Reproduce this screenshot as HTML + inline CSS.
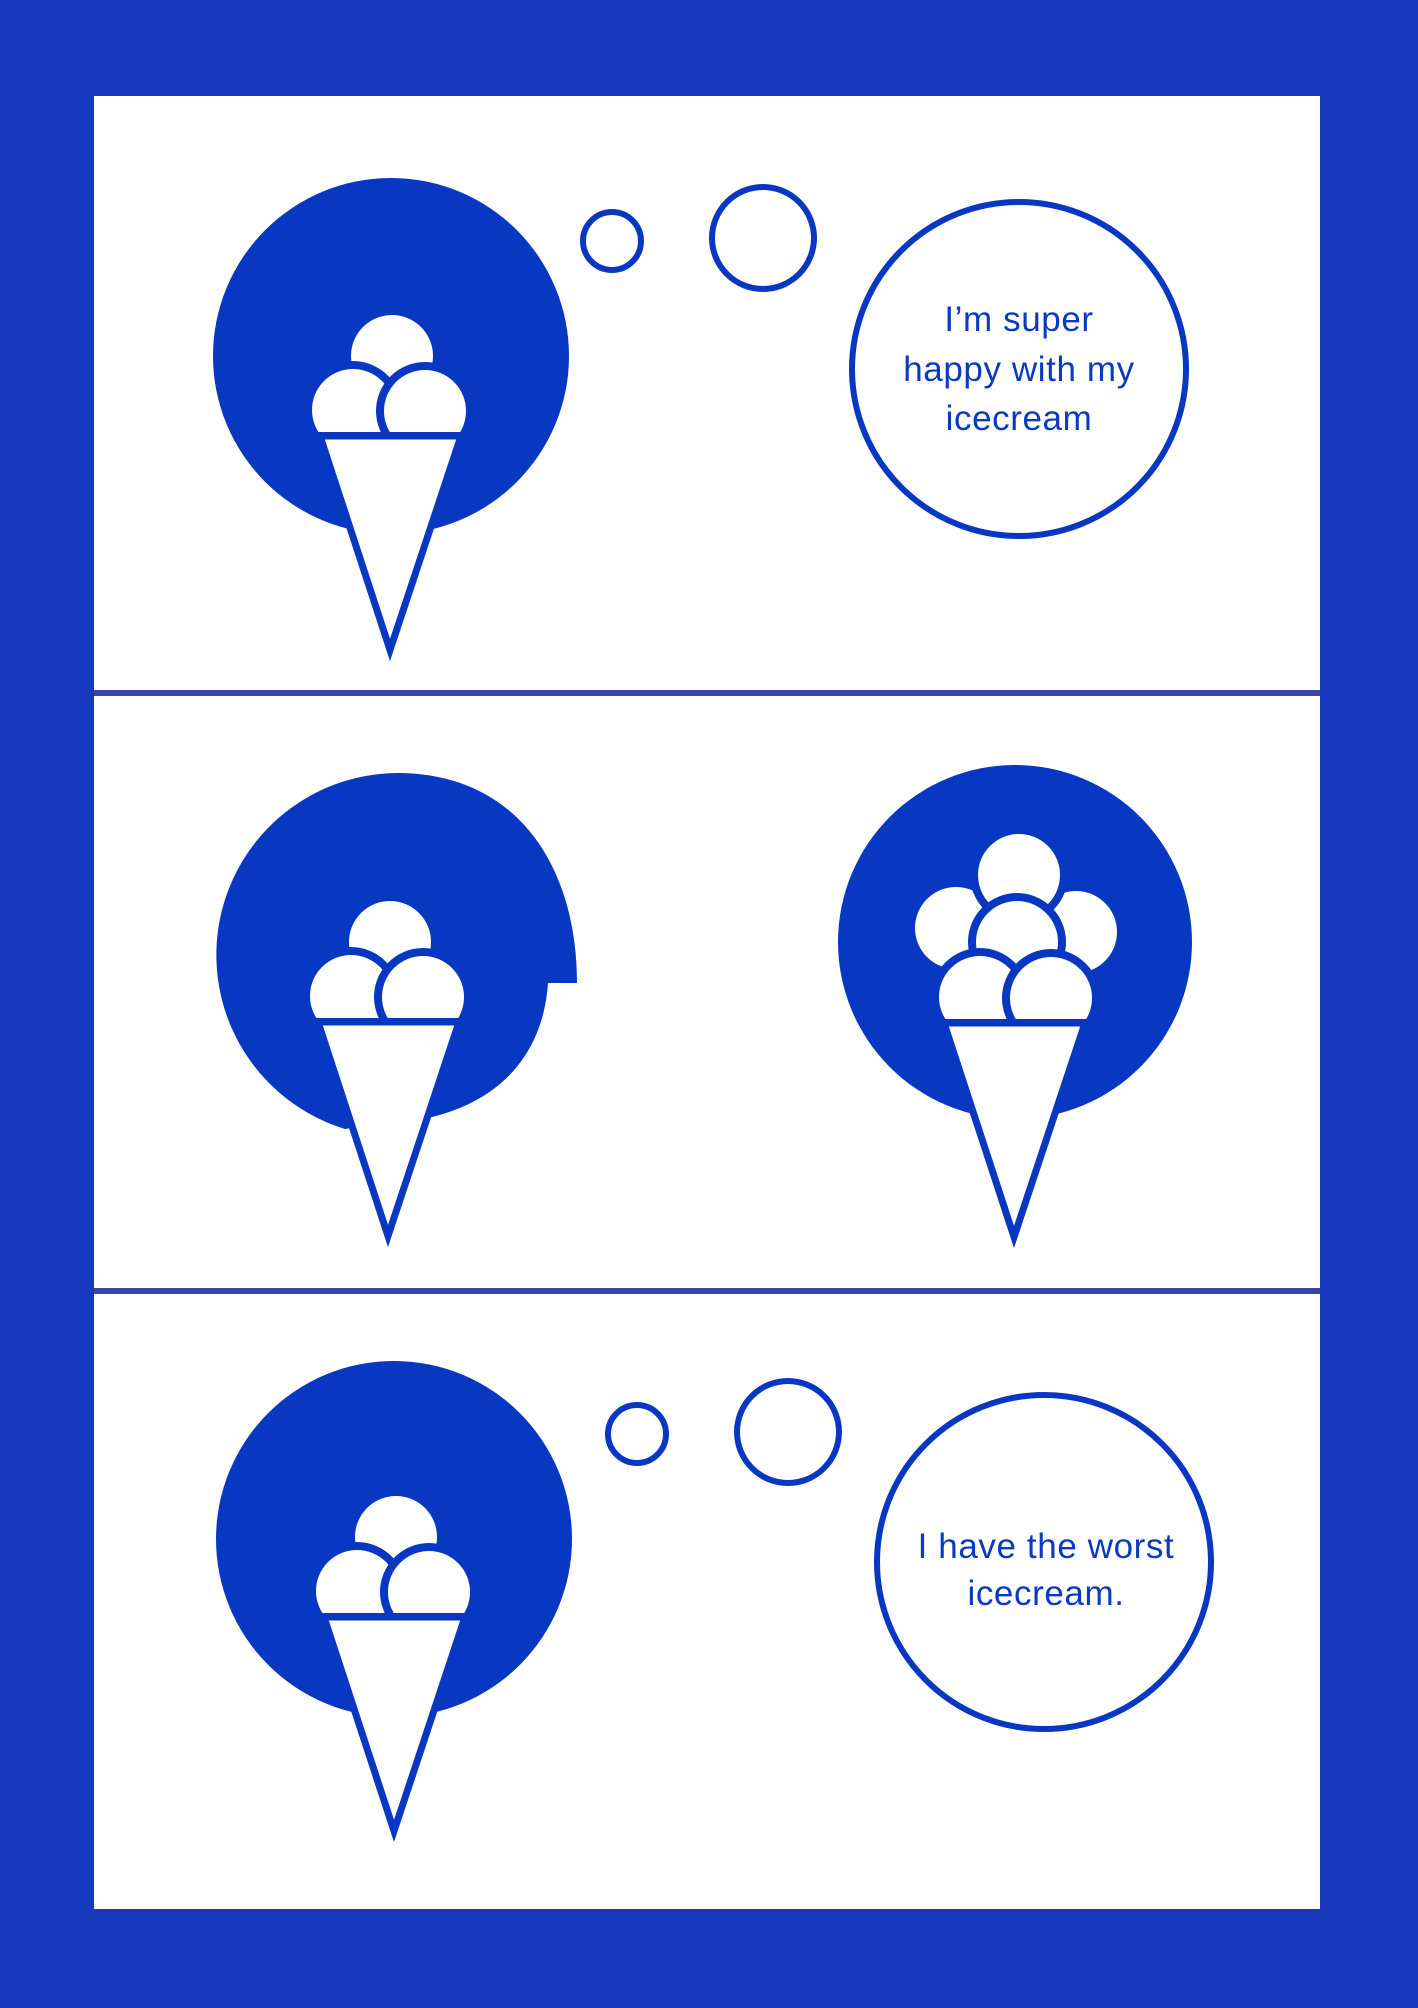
<!DOCTYPE html>
<html><head><meta charset="utf-8"><style>
html,body{margin:0;padding:0;background:#1538bd;}
svg{display:block}
text{font-family:"Liberation Sans",sans-serif;fill:#0a3ac0;font-size:35px;letter-spacing:0.6px;text-anchor:middle}
</style></head><body>
<svg width="1418" height="2008" viewBox="0 0 1418 2008" xmlns="http://www.w3.org/2000/svg">
<defs>
<clipPath id="c3"><rect x="0" y="0" width="1418" height="432"/></clipPath>
<g id="cone3">
  <g clip-path="url(#c3)">
    <circle cx="392" cy="356" r="45" fill="#fff" stroke="#0838c2" stroke-width="8"/>
    <circle cx="353" cy="410" r="45" fill="#fff" stroke="#0838c2" stroke-width="8"/>
    <circle cx="425" cy="411" r="45" fill="#fff" stroke="#0838c2" stroke-width="8"/>
  </g>
  <polygon points="320,436 461,436 390,650" fill="#fff" stroke="#0838c2" stroke-width="7" stroke-miterlimit="20"/>
</g>
</defs>
<rect x="0" y="0" width="1418" height="2008" fill="#1538bd"/>
<rect x="94" y="96" width="1226" height="1813" fill="#fff"/>
<rect x="94" y="690" width="1226" height="6" fill="#3a45a8"/>
<rect x="94" y="1288" width="1226" height="6" fill="#3a45a8"/>

<!-- panel 1 -->
<circle cx="391" cy="356" r="178" fill="#0838c2"/>
<use href="#cone3"/>
<g fill="none" stroke="#0838c2" stroke-width="6">
<circle cx="612" cy="241" r="29"/>
<circle cx="763" cy="238" r="51"/>
<circle cx="1019" cy="369" r="167"/>
</g>
<text x="1019" y="331">I’m super</text>
<text x="1019" y="381">happy with my</text>
<text x="1019" y="430">icecream</text>

<!-- panel 2 left -->
<path d="M397,773 A182,182 0 0 0 345,1129 L432,1117 C500,1100 543,1055 548,983 L577,983 C577,870 520,773 397,773 Z" fill="#0838c2"/>
<use href="#cone3" transform="translate(-2,586)"/>

<!-- panel 2 right -->
<circle cx="1015" cy="942" r="177" fill="#0838c2"/>
<clipPath id="c5"><rect x="0" y="0" width="1418" height="1019"/></clipPath>
<g clip-path="url(#c5)" fill="#fff" stroke="#0838c2" stroke-width="8">
<circle cx="956" cy="928" r="45"/>
<circle cx="1076" cy="932" r="45"/>
<circle cx="1019" cy="875" r="45"/>
<circle cx="1017" cy="942" r="45"/>
<circle cx="980" cy="997" r="45"/>
<circle cx="1051" cy="998" r="45"/>
</g>
<polygon points="944,1023 1085,1023 1014,1237" fill="#fff" stroke="#0838c2" stroke-width="7" stroke-miterlimit="20"/>

<!-- panel 3 -->
<circle cx="394" cy="1539" r="178" fill="#0838c2"/>
<use href="#cone3" transform="translate(4,1181)"/>
<g fill="none" stroke="#0838c2" stroke-width="6">
<circle cx="637" cy="1434" r="29"/>
<circle cx="788" cy="1432" r="51"/>
<circle cx="1044" cy="1562" r="167"/>
</g>
<text x="1046" y="1558">I have the worst</text>
<text x="1046" y="1605">icecream.</text>
</svg>
</body></html>
